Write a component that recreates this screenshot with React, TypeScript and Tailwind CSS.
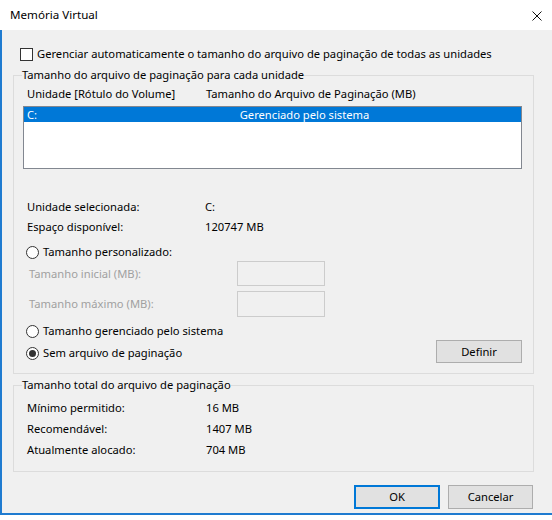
import React from "react";

const font = { fontFamily: '"Noto Sans", "Open Sans", sans-serif' };

function Radio({ checked, label }: { checked?: boolean; label: string }) {
  return (
    <div className="flex h-[16px] items-center">
      <span className="flex h-[13px] w-[13px] items-center justify-center rounded-full border border-[#333333] bg-white">
        {checked && <span className="h-[7px] w-[7px] rounded-full bg-[#333333]" />}
      </span>
      <span className="ml-[4px]">{label}</span>
    </div>
  );
}

function Row({ label, value, w = 178 }: { label: string; value: string; w?: number }) {
  return (
    <div className="flex h-[16px] items-center pl-[13px]">
      <span className={w === 178 ? "w-[178px]" : "w-[179px]"}>{label}</span>
      <span>{value}</span>
    </div>
  );
}

export default function App() {
  return (
    <div
      className="flex h-[520px] w-[552px] flex-col bg-white text-[11.2px] leading-[16px] text-black"
      style={font}
    >
      {/* Title bar */}
      <div className="flex h-[30px] shrink-0 items-center justify-between pl-[10px] pr-[10px]">
        <span className="text-[11.6px]">Memória Virtual</span>
        <svg width="10" height="10" viewBox="0 0 10 10" className="mt-[1px]">
          <path d="M0.5 0.5 L9.5 9.5 M9.5 0.5 L0.5 9.5" stroke="#111" strokeWidth="1" />
        </svg>
      </div>

      {/* Body */}
      <div className="flex h-[485px] shrink-0 flex-col border-b-2 border-l-2 border-[#1f7bd0] bg-[#f0f0f0]">
        <div className="ml-[18px] mt-[16px] flex h-[16px] items-center">
          <span className="h-[13px] w-[13px] border border-[#333333] bg-white" />
          <span className="ml-[4px]">
            Gerenciar automaticamente o tamanho do arquivo de paginação de todas as unidades
          </span>
        </div>

        <fieldset className="ml-[11px] mt-[5px] w-[521px] border border-[#dcdcdc] pb-[10px]">
          <legend className="ml-[8px] leading-[16px]">
            Tamanho do arquivo de paginação para cada unidade
          </legend>
          <div className="mt-[3px] flex h-[16px] items-center pl-[13px]">
            <span className="w-[179px]">Unidade [Rótulo do Volume]</span>
            <span>Tamanho do Arquivo de Paginação (MB)</span>
          </div>
          <div className="ml-[9px] mt-[4px] h-[63px] w-[499px] border border-[#828790] bg-white">
            <div className="flex h-[15px] items-center bg-[#0078d7] text-white">
              <span className="w-[179px] pl-[3px]">C:</span>
              <span className="w-[203px] text-center">Gerenciado pelo sistema</span>
            </div>
          </div>

          <div className="mt-[30px]">
            <Row label="Unidade selecionada:" value="C:" />
          </div>
          <div className="mt-[4px]">
            <Row label="Espaço disponível:" value="120747 MB" />
          </div>

          <div className="ml-[12px] mt-[9px]">
            <Radio label="Tamanho personalizado:" />
          </div>
          <div className="mt-[1px] flex items-center pl-[15px] text-[#a0a0a0]">
            <span className="w-[208px]">Tamanho inicial (MB):</span>
            <span className="h-[25px] w-[88px] border border-[#cccccc]" />
          </div>
          <div className="mt-[5px] flex items-center pl-[15px] text-[#a0a0a0]">
            <span className="w-[208px]">Tamanho máximo (MB):</span>
            <span className="h-[26px] w-[88px] border border-[#cccccc]" />
          </div>

          <div className="ml-[12px] mt-[6px]">
            <Radio label="Tamanho gerenciado pelo sistema" />
          </div>
          <div className="ml-[12px] mr-[11px] mt-[1px] flex items-start justify-between">
            <div className="mt-[5px]">
              <Radio checked label="Sem arquivo de paginação" />
            </div>
            <button className="h-[23px] w-[86px] border border-[#adadad] bg-[#e1e1e1]">
              Definir
            </button>
          </div>
        </fieldset>

        <fieldset className="ml-[11px] mt-[3px] w-[521px] border border-[#dcdcdc] pb-[13px]">
          <legend className="ml-[8px] leading-[16px]">
            Tamanho total do arquivo de paginação
          </legend>
          <div className="mt-[7px]">
            <Row label="Mínimo permitido:" value="16 MB" w={179} />
          </div>
          <div className="mt-[5px]">
            <Row label="Recomendável:" value="1407 MB" w={179} />
          </div>
          <div className="mt-[5px]">
            <Row label="Atualmente alocado:" value="704 MB" w={179} />
          </div>
        </fieldset>

        <div className="mr-[19px] mt-[13px] flex justify-end gap-[8px]">
          <button className="h-[24px] w-[86px] border-2 border-[#0078d7] bg-[#e1e1e1]">OK</button>
          <button className="h-[24px] w-[85px] border border-[#adadad] bg-[#e1e1e1]">
            Cancelar
          </button>
        </div>
      </div>
    </div>
  );
}
